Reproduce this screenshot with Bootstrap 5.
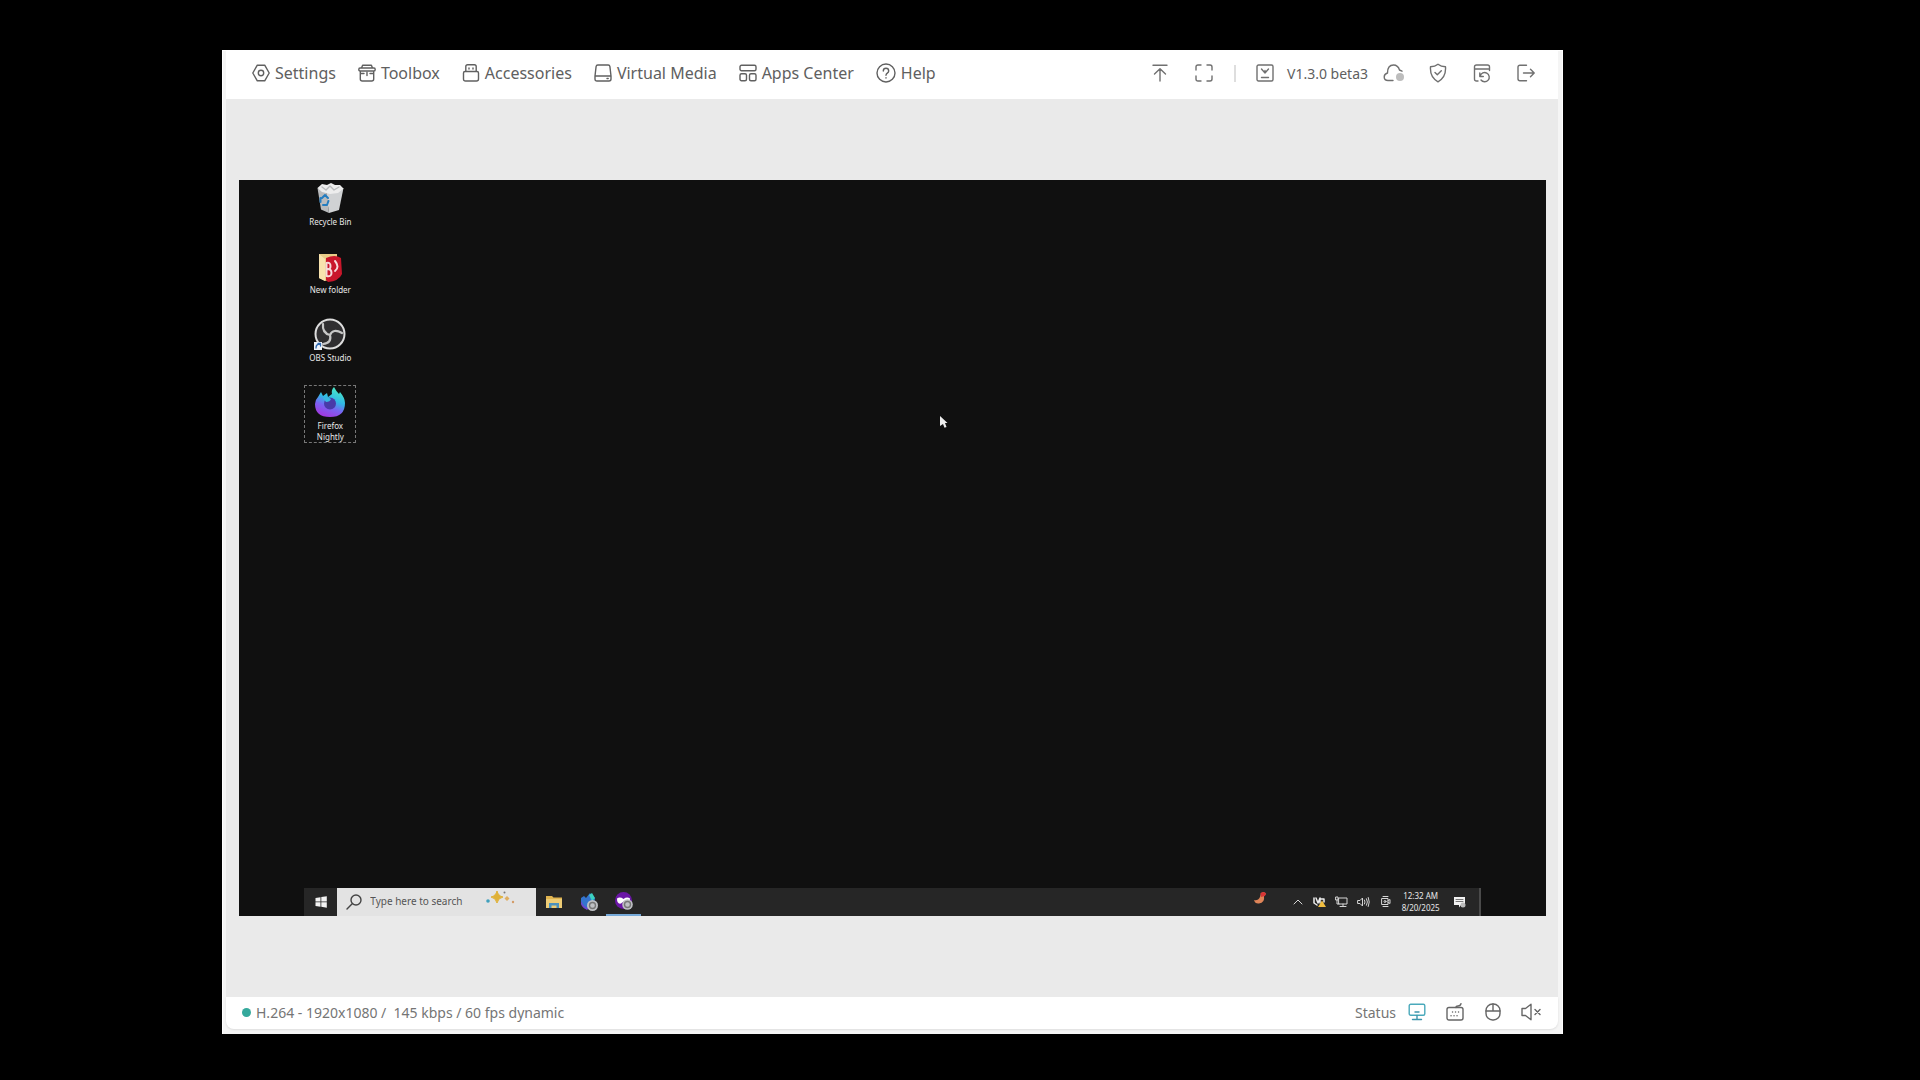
<!DOCTYPE html>
<html lang="en">
<head>
<meta charset="utf-8">
<meta name="viewport" content="width=device-width, initial-scale=1">
<title>Remote console</title>
<link href="https://cdn.jsdelivr.net/npm/bootstrap@5.3.0/dist/css/bootstrap.min.css" rel="stylesheet">
<style>
body{background:#000;color:#606060;font-family:"Noto Sans","Open Sans",sans-serif;font-size:16px;padding:50px 357px 46px 222px}
svg{display:block;flex:none;fill:none;stroke:currentColor;stroke-width:1.4;stroke-linecap:round;stroke-linejoin:round}
button{background:none;border:0;padding:0;color:inherit}
.console{background:#f5f5f5;padding:0 4px 5px 3px;border:1px solid #fff;border-bottom:0}
.topbar{height:48px;padding:0 10px 4px 26px;background:#fff}
.menu-list{gap:22px}
.menu-btn{gap:5px;line-height:24px;white-space:nowrap}
.tool-btn{width:44px;height:24px;color:#707070}
.divide{width:2px;height:17px;margin:0 7px 0 8px;background:#dedede}
.version{font-size:14px;width:85px;white-space:nowrap}
.stage{background:#eaeaea;padding:0 12px 0 13px}
.screen{background:#101010;aspect-ratio:16/9;padding:0 5%;overflow:hidden;color:#e8e8e8;font-size:8px}
.icons-col{gap:11px;width:52px;padding-top:1px}
.desk-icon{width:52px;height:58px;padding-top:1px;line-height:11px;text-align:center;margin-bottom:-1px}
.desk-icon svg{margin:0 auto 2px;stroke:none}
.desk-icon.chosen{outline:1px dashed #777;outline-offset:-1px}
.taskbar{height:28px;background:#262626}
.start{width:33px}
.search{width:199px;background:#e3e3e3;color:#444;padding:0 8px;gap:7px}
.search input{font-size:10px;width:104px;background:none;border:0;padding:0;color:#444;outline:0}
.search input::placeholder{color:#555;opacity:1}
.task-btn{width:35px}
.task-btn.running{border-bottom:2px solid #76a9d8}
.task-btn svg,.plain{stroke:none}
.tray-btn{width:22px;color:#d6d6d6}
.tray-btn svg{stroke-width:1}
.tray-bird{margin-right:16px}
.clock{width:48px;line-height:12px;white-space:nowrap}
.show-desk{width:2px;background:#4a4a4a;margin-left:8px}
.pointer{left:53.6%;top:32%}
.statusbar{height:32px;background:#fff;border-radius:0 0 8px 8px;padding:0 8px 2px 16px;color:#757575;font-size:14px;box-shadow:0 1px 2px #ddd}
.live-dot{width:9px;height:9px;border-radius:50%;background:#35a99c;margin-right:5px}
.state-btn{width:38px;height:24px;color:#666}
.state-label{margin-right:2px}
</style>
<script src="https://cdn.jsdelivr.net/npm/bootstrap@5.3.0/dist/js/bootstrap.bundle.min.js"></script>
</head>
<body class="min-vh-100 d-flex">
<div class="console flex-grow-1 d-flex flex-column">
  <header class="topbar d-flex align-items-center justify-content-between">
    <nav class="menu-list d-flex" aria-label="Main">
      <button class="menu-btn d-flex align-items-center"><svg width="18" height="18" viewBox="0 0 18 18"><path d="M5.3 1.2h7.4l4.5 7.8-4.5 7.8H5.3L.8 9z"/><circle cx="9" cy="9" r="2.7"/></svg>Settings</button>
      <button class="menu-btn d-flex align-items-center"><svg width="18" height="18" viewBox="0 0 18 18"><path d="M3.5 4 4.6 1.3h8.8L14.5 4M2 4h14q1.2 0 1.2 1.5T16 7H2Q.8 7 .8 5.500T2 4zM2.300 7v8q0 2 2 2h9.400q2 0 2-2V7M9 8.500v3M2.300 9.500h3.700M12 9.500h3.700"/></svg>Toolbox</button>
      <button class="menu-btn d-flex align-items-center"><svg width="18" height="18" viewBox="0 0 18 18"><path d="M3.800 7.500V2.500q0-1.800 1.800-1.800h6.800q1.800 0 1.800 1.800v5M3 7.500h12q1.500 0 1.500 1.500v6q0 2-2 2h-11q-2 0-2-2V9q0-1.500 1.500-1.500zM7 4v1M11 4v1"/></svg>Accessories</button>
      <button class="menu-btn d-flex align-items-center"><svg width="18" height="18" viewBox="0 0 18 18"><path d="M3.800 1h10.400q1.500 0 1.700 1.500L17 12v3q0 2-2 2H3q-2 0-2-2v-3l1.100-9.500Q2.300 1 3.800 1zM1 12h16M13 14.500h1.200"/></svg>Virtual Media</button>
      <button class="menu-btn d-flex align-items-center"><svg width="18" height="18" viewBox="0 0 18 18"><rect x="1" y="1.200" width="16" height="5.500" rx="1.500"/><rect x="1" y="9.800" width="6.500" height="7" rx="1.500"/><rect x="10.500" y="9.800" width="6.500" height="7" rx="1.500"/></svg>Apps Center</button>
      <button class="menu-btn d-flex align-items-center"><svg width="20" height="20" viewBox="0 0 20 20"><circle cx="10" cy="10" r="9"/><path d="M7.300 8q0-2.700 2.700-2.700T12.700 8q0 1.300-1.400 2.200Q10 11 10 12.300M10 14.800v.2"/></svg>Help</button>
    </nav>
    <div class="d-flex align-items-center">
      <button class="tool-btn d-flex align-items-center justify-content-center" aria-label="Collapse"><svg width="18" height="20" viewBox="0 0 18 20"><path d="M2 2.200h14M9 18V6M3.500 11 9 5.800l5.500 5.200"/></svg></button>
      <button class="tool-btn d-flex align-items-center justify-content-center" aria-label="Full screen"><svg width="18" height="18" viewBox="0 0 18 18"><path d="M1 6V3q0-2 2-2h3M12 1h3q2 0 2 2v3M17 12v3q0 2-2 2h-3M6 17H3q-2 0-2-2v-3"/></svg></button>
      <span class="divide"></span>
      <button class="tool-btn d-flex align-items-center justify-content-center" aria-label="Update"><svg width="18" height="18" viewBox="0 0 18 18"><rect x="1" y="1" width="16" height="16" rx="1.500"/><path d="M5.500 5 9 9l3.500-4M9 9V6.500M5.500 13.500h7"/></svg></button>
      <span class="version">V1.3.0 beta3</span>
      <button class="tool-btn d-flex align-items-center justify-content-center" aria-label="Cloud"><svg width="22" height="20" viewBox="0 0 22 20"><path d="M10 17.500H5Q1.200 17.500 1.200 14q0-3 3.300-4Q4.500 2 10.500 2 15 2 16.500 7l2.500 1.200"/><circle class="plain" cx="17" cy="14" r="4" fill="#bdbdbd"/></svg></button>
      <button class="tool-btn d-flex align-items-center justify-content-center" aria-label="Security"><svg width="18" height="20" viewBox="0 0 18 20"><path d="M9 1.200q3 2.300 7.500 2.600.8 10.500-7.500 15Q.7 14.300 1.500 3.800 6 3.500 9 1.200zM6 9.500 8.300 11.800 12.300 7.800"/></svg></button>
      <button class="tool-btn d-flex align-items-center justify-content-center" aria-label="Restore"><svg width="18" height="20" viewBox="0 0 18 20"><path d="M5 18H3.500q-2 0-2-2V4q0-2 2-2h11q2 0 2 2v3.500M1.500 6h15M6.800 10v3.500h3.500M7.200 13A4.600 4.600 0 1 1 8 17"/></svg></button>
      <button class="tool-btn d-flex align-items-center justify-content-center" aria-label="Log out"><svg width="18" height="18" viewBox="0 0 18 18"><path d="M9.500 1.200H3q-2 0-2 2v11.600q0 2 2 2h6.500M6.500 9h10.500M13.500 5.300 17.200 9l-3.700 3.700"/></svg></button>
    </div>
  </header>
  <main class="stage flex-grow-1 d-flex flex-column justify-content-center">
    <div class="screen position-relative d-flex flex-column justify-content-between">
      <div class="icons-col d-flex flex-column">
        <div class="desk-icon"><svg width="32" height="32" viewBox="0 0 32 32"><path d="M3.500 6 12 9.500 15 31 7 27.500z" fill="#b9bbbd"/><path d="M12 9.500 29.500 6 25 28 15 31z" fill="#d0d2d4"/><path d="M3.500 6 8 2l5 1 4-2 4 2 5 0 3.500 3.500L24 11l-8 1-8-2z" fill="#ededed"/><path d="m8 5 4 3 4-4 4 4 5-3" stroke="#b9bbbd"/><path d="m8 16 3-3 3 3M14.500 19 13 23H9M6.500 20v-4" stroke="#247dc0" stroke-width="2"/></svg>Recycle Bin</div>
        <div class="desk-icon"><svg width="32" height="32" viewBox="0 0 32 32"><path d="M5 4h18v24l-12 3-6-3z" fill="#e9cc88"/><path d="m5 4 6 5v22l-6-3z" fill="#f8e3ae"/><path d="M12 8q9-4 15 0l1 16q-3 7-14 8l-2-2z" fill="#c9172b"/><path d="M12.500 13v13M12.500 13q4-1 4 3t-3 3q4 0 4 4t-5 3M21 11q5 6 0 10" stroke="#f6dada" stroke-width="2"/></svg>New folder</div>
        <div class="desk-icon"><svg width="32" height="32" viewBox="0 0 32 32"><circle cx="16" cy="16" r="14.500" fill="#302f31" stroke="#ddd" stroke-width="2"/><path d="M16 17Q8 15 9 6M16 17q3-7 12-2M16 17q2 8-7 9" stroke="#c7c7c7" stroke-width="2.200"/><rect y="24" width="8" height="8" fill="#eef3fa"/><path d="M2 30q0-4 4-4M4 25.500h2.500V28" stroke="#2e69b1" stroke-width="1.300"/></svg>OBS Studio</div>
        <div class="desk-icon chosen"><svg width="32" height="32" viewBox="0 0 32 32"><defs><linearGradient id="fx" x1=".8" y1="0" x2=".4" y2="1"><stop offset="0" stop-color="#4df0c0"/><stop offset=".45" stop-color="#31b7e6"/><stop offset=".7" stop-color="#7a62f2"/><stop offset="1" stop-color="#a03ae0"/></linearGradient></defs><path d="M4 11 7 6l2 4 4-3 1 4 4-3Q17 4 20 1q2 4 5 7l1-2q5 6 5 11 0 14-15 14T1 18q0-4 3-7z" fill="url(#fx)"/><circle cx="16" cy="17.500" r="6" fill="#493aa8"/><path d="M9 12q5-2 8 1-1 3-5 3z" fill="#38b7df"/></svg>Firefox<br>Nightly</div>
      </div>
      <div class="taskbar d-flex justify-content-between">
        <div class="d-flex">
          <button class="start d-flex align-items-center justify-content-center" aria-label="Start"><svg class="plain" width="12" height="12" viewBox="0 0 12 12"><path fill="#f2f2f2" d="M.5 2 5.500 1.200v4.300h-5zM6.300 1.100 11.800.2v5.300H6.300zM.5 6.300h5v4.400L.5 10zM6.300 6.300h5.500v5.500l-5.500-1z"/></svg></button>
          <label class="search d-flex align-items-center"><svg width="18" height="18" viewBox="0 0 18 18"><circle cx="11" cy="7" r="5"/><path d="M7.200 10.700 2 16"/></svg><input type="text" placeholder="Type here to search" aria-label="Search"><svg class="plain ms-1 mb-2" width="30" height="14" viewBox="0 0 30 14"><path d="M12 0q1 5 6 6-5 1-6 6-1-5-6-6 5-1 6-6z" fill="#dfb137" stroke="#dfb137" stroke-width="1"/><path d="m22 5 2.500 2.500L22 10l-2.500-2.500z" fill="#dfae61"/><circle cx="3" cy="10" r="1.800" fill="#40a0bd"/><circle cx="19.500" cy="1.500" r="1" fill="#777"/><circle cx="28" cy="11" r="1.200" fill="#d39b67"/></svg></label>
          <button class="task-btn d-flex align-items-center justify-content-center" aria-label="File Explorer"><svg width="16" height="14" viewBox="0 0 16 14"><path d="M0 1h6l1.500 1.500H16V13H0z" fill="#e0b450"/><path d="M0 4h16v9H0z" fill="#edcc75"/><path d="M3 13V8h10v5h-2.500v-2.500h-5V13z" fill="#4a91bd"/></svg></button>
          <button class="task-btn d-flex align-items-center justify-content-center" aria-label="Firefox Nightly"><svg width="18" height="18" viewBox="0 0 18 18"><path d="M1 5 4 3l2 2 4-5 2 3 3 2-1 8-7 3Q0 14 1 5z" fill="#3474ce"/><path d="m9 2 3-2 3 5-3 3z" fill="#3bd0c1"/><path d="M1 8q3 7 8 7l-2 2Q0 14 1 8z" fill="#6d47cf"/><circle cx="12.500" cy="12.500" r="5.500" fill="#bfc1c5"/><circle cx="12.500" cy="12.500" r="3" fill="none" stroke="#777"/></svg></button>
          <button class="task-btn running d-flex align-items-center justify-content-center" aria-label="Private browser"><svg width="18" height="18" viewBox="0 0 18 18"><circle cx="8.500" cy="8.500" r="8.500" fill="#6b16a6"/><path d="M2 6.500q3-2 6.500.5 3.500-2.500 6.500-.5 0 6-4 5L8.500 9.500 6 11.500q-4 1-4-5z" fill="#fff"/><circle cx="12.500" cy="12.500" r="5.300" fill="#bfc1c5"/><circle cx="12.500" cy="12.500" r="3" fill="none" stroke="#777"/></svg></button>
        </div>
        <div class="d-flex">
          <button class="tray-btn tray-bird d-flex justify-content-center pt-1" aria-label="News"><svg class="plain" width="12" height="12" viewBox="0 0 12 12"><path d="M6 5 7 1l3-1 2 2-2 2q1 7-5 7.500Q1 12 0 8q4 1 6-3z" fill="#df8458"/><path d="M6.500 1 9 0l3 1-1 3-4 1z" fill="#d83535"/></svg></button>
          <button class="tray-btn d-flex align-items-center justify-content-center" aria-label="Hidden icons"><svg width="10" height="8" viewBox="0 0 10 8"><path d="m1 6 4-4 4 4"/></svg></button>
          <button class="tray-btn d-flex align-items-center justify-content-center" aria-label="Security"><svg width="13" height="12" viewBox="0 0 13 12"><path d="M1 2v5l3 2M3 2l2 5 2-5v5M8 3h3v3" stroke="#eee" stroke-width="1.500"/><path class="plain" d="M9 4.500 13 11H5z" fill="#f0be40"/></svg></button>
          <button class="tray-btn d-flex align-items-center justify-content-center" aria-label="Network"><svg width="13" height="12" viewBox="0 0 13 12"><path d="M4 2h8v6H4zM8 8v2.500M5 10.500h6M1 1h2v3H1zM2 4v4h2"/></svg></button>
          <button class="tray-btn d-flex align-items-center justify-content-center" aria-label="Volume"><svg width="13" height="12" viewBox="0 0 13 12"><path d="M1 4.500h2L5.500 2v8L3 7.500H1zM7.500 4q1.200 2 0 4M9.500 2.700q2 3.300 0 6.600M11.300 1.500q2 4.500 0 9"/></svg></button>
          <button class="tray-btn d-flex align-items-center justify-content-center" aria-label="Camera"><svg width="11" height="13" viewBox="0 0 11 13"><path d="M2 3.500h6v6H2zM8 5.500l2-1v4l-2-1M3 1.500h5M3 11.500h5"/><circle cx="5" cy="6.500" r="1"/></svg></button>
          <div class="clock text-center d-flex flex-column justify-content-center"><span>12:32 AM</span><span>8/20/2025</span></div>
          <button class="tray-btn ms-1 d-flex align-items-center justify-content-center" aria-label="Notifications"><svg class="plain" width="13" height="12" viewBox="0 0 13 12"><path d="M1 1h11v8H8l-2 2.500V9H1z" fill="#f2f2f2"/><path d="M3 3.500h7M3 5.500h7" stroke="#777"/><circle cx="10" cy="9" r="2.500" fill="#bbb"/></svg></button>
          <span class="show-desk"></span>
        </div>
      </div>
      <svg class="pointer plain position-absolute" width="8" height="12" viewBox="0 0 8 12"><path d="M0 0 7.500 7H5l1.500 4-2 .8L3 8 0 10z" fill="#eee"/></svg>
    </div>
  </main>
  <footer class="statusbar d-flex align-items-center justify-content-between">
    <div class="d-flex align-items-center"><span class="live-dot"></span><span>H.264 - 1920x1080 /&nbsp; 145 kbps / 60 fps dynamic</span></div>
    <div class="d-flex align-items-center">
      <span class="state-label">Status</span>
      <button class="state-btn d-flex align-items-center justify-content-center" aria-label="Display"><svg width="18" height="18" viewBox="0 0 18 18" stroke="#4b9bb0"><rect x="1.200" y="1.200" width="15.600" height="11" rx="1.500" stroke="#4aa9bb"/><path d="M7 9h4M9 12.500V16M4.500 16.500h9" stroke="#3e95ac"/></svg></button>
      <button class="state-btn d-flex align-items-center justify-content-center" aria-label="Keyboard"><svg width="18" height="18" viewBox="0 0 18 18"><rect x="1" y="4.500" width="16" height="12.500" rx="2"/><path d="M10 4.500q0-1.500 2-1.500 2.500 0 3-2.300M6.500 9h.1M9.500 9h.1M12.500 9h.1M5 12.800h.1M8 12.800h.1M11 12.800h.1"/></svg></button>
      <button class="state-btn d-flex align-items-center justify-content-center" aria-label="Mouse"><svg width="16" height="18" viewBox="0 0 16 18"><rect x="1" y="1" width="14" height="16" rx="6.500"/><path d="M1 8h14M8 1v7"/></svg></button>
      <button class="state-btn d-flex align-items-center justify-content-center" aria-label="Muted"><svg width="20" height="18" viewBox="0 0 20 18"><path d="M1 5.500h3.500L10 1.200v15.600L4.500 12.500H1zM14 6.500l5 5M19 6.500l-5 5"/></svg></button>
    </div>
  </footer>
</div>
</body>
</html>
